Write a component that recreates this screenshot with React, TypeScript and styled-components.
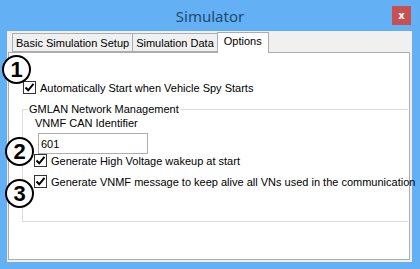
import React from 'react';
import styled, { createGlobalStyle } from 'styled-components';

const GlobalStyle = createGlobalStyle`
  html, body {
    margin: 0;
    padding: 0;
    background-color: #63b1f4;
  }
`;

const Window = styled.div`
  position: relative;
  width: 420px;
  height: 269px;
  background-color: #63b1f4;
  display: flex;
  flex-direction: column;
  font-family: 'Liberation Sans', Arial, sans-serif;
  font-size: 11px;
  color: #000;
  overflow: hidden;
`;

const TitleBar = styled.div`
  height: 31px;
  display: grid;
  grid-template-columns: 1fr auto 1fr;
  align-items: start;
`;

const Title = styled.div`
  grid-column: 2;
  padding-top: 6px;
  font-family: 'Noto Sans', 'Open Sans', sans-serif;
  font-size: 15px;
  color: #1d4a73;
  line-height: 20px;
`;

const CloseButton = styled.div`
  grid-column: 3;
  justify-self: end;
  margin: 6px 9px 0 0;
  width: 19px;
  height: 19px;
  background-color: #c75050;
  color: #fff;
  font-family: 'DejaVu Sans', sans-serif;
  font-weight: bold;
  font-size: 10px;
  display: flex;
  align-items: center;
  justify-content: center;
`;

const Client = styled.div`
  flex: 1;
  margin: 0 8px 7px 7px;
  background-color: #f0f0f0;
  display: flex;
  flex-direction: column;
  padding: 0 2px 2px 1px;
`;

const TabStrip = styled.div`
  display: flex;
  align-items: flex-end;
  height: 21px;
  padding-left: 5px;
`;

const Tab = styled.div<{ $active?: boolean }>`
  height: ${(p) => (p.$active ? '21px' : '19px')};
  padding: 0 ${(p) => (p.$active ? '6px' : '3px')};
  margin-bottom: ${(p) => (p.$active ? '-1px' : '0')};
  background-color: ${(p) => (p.$active ? '#fff' : '#f0f0f0')};
  border: 1px solid #acacac;
  border-bottom: ${(p) => (p.$active ? 'none' : '1px solid #acacac')};
  margin-left: -1px;
  display: flex;
  align-items: ${(p) => (p.$active ? 'flex-start' : 'center')};
  padding-top: ${(p) => (p.$active ? '2px' : '0')};
  box-sizing: border-box;
  position: relative;
  z-index: ${(p) => (p.$active ? 1 : 0)};
  white-space: nowrap;
`;

const Panel = styled.div`
  flex: 1;
  background-color: #fff;
  border: 1px solid #acacac;
  display: flex;
  flex-direction: column;
  padding: 28px 1px 0 13px;
`;

const CheckRow = styled.label<{ $indent?: number }>`
  display: flex;
  align-items: center;
  gap: 4px;
  height: 13px;
  margin-left: ${(p) => p.$indent ?? 0}px;
  white-space: nowrap;
`;

const Box = styled.span`
  width: 11px;
  height: 11px;
  border: 1px solid #333;
  background: #fff;
  display: flex;
  align-items: center;
  justify-content: center;
`;

const Group = styled.div`
  margin-top: 15px;
  position: relative;
  border-top: 1px solid #dcdcdc;
  border-left: 1px solid #dcdcdc;
  border-bottom: 1px solid #dcdcdc;
  height: 107px;
  padding: 4px 0 0 12px;
  display: flex;
  flex-direction: column;
`;

const Legend = styled.div`
  margin-top: -11px;
  margin-left: -7px;
  align-self: flex-start;
  background: #fff;
  padding: 0 1px;
  line-height: 13px;
`;

const FieldLabel = styled.div`
  line-height: 13px;
  margin-top: 1px;
`;

const TextBox = styled.div`
  margin-top: 3px;
  margin-left: 3px;
  width: 106px;
  height: 19px;
  border: 1px solid #abadb3;
  display: flex;
  align-items: center;
  padding-left: 2px;
`;

const OptionGap = styled.div`
  height: 8px;
`;

const Marker = styled.div<{ $x: number; $y: number }>`
  position: absolute;
  left: ${(p) => p.$x}px;
  top: ${(p) => p.$y}px;
  width: 25px;
  height: 25px;
  border: 2.5px solid #000;
  border-radius: 50%;
  background: #fff;
  display: flex;
  align-items: center;
  justify-content: center;
  font-family: 'Liberation Sans', Arial, sans-serif;
  font-weight: bold;
  font-size: 22px;
  line-height: 1;
`;

const Check = () => (
  <svg width="11" height="11" viewBox="0 0 11 11">
    <path d="M1.5 5.5 L4.2 8.3 L9.5 1.8" fill="none" stroke="#000" strokeWidth="2" />
  </svg>
);

function CheckOption({ label, indent }: { label: string; indent?: number }) {
  return (
    <CheckRow $indent={indent}>
      <Box>
        <Check />
      </Box>
      {label}
    </CheckRow>
  );
}

function App() {
  return (
    <>
      <GlobalStyle />
      <Window>
        <TitleBar>
          <Title>Simulator</Title>
          <CloseButton>x</CloseButton>
        </TitleBar>
        <Client>
          <TabStrip>
            <Tab>Basic Simulation Setup</Tab>
            <Tab>Simulation Data</Tab>
            <Tab $active>Options</Tab>
          </TabStrip>
          <Panel>
            <CheckOption label="Automatically Start when Vehicle Spy Starts" indent={1} />
            <Group>
              <Legend>GMLAN Network Management</Legend>
              <FieldLabel>VNMF CAN Identifier</FieldLabel>
              <TextBox>601</TextBox>
              <CheckOption label="Generate High Voltage wakeup at start" indent={-1} />
              <OptionGap />
              <CheckOption label="Generate VNMF message to keep alive all VNs used in the communication" indent={-1} />
            </Group>
          </Panel>
        </Client>
        <Marker $x={2} $y={55}>1</Marker>
        <Marker $x={5} $y={137}>2</Marker>
        <Marker $x={5} $y={179}>3</Marker>
      </Window>
    </>
  );
}

export default App;
